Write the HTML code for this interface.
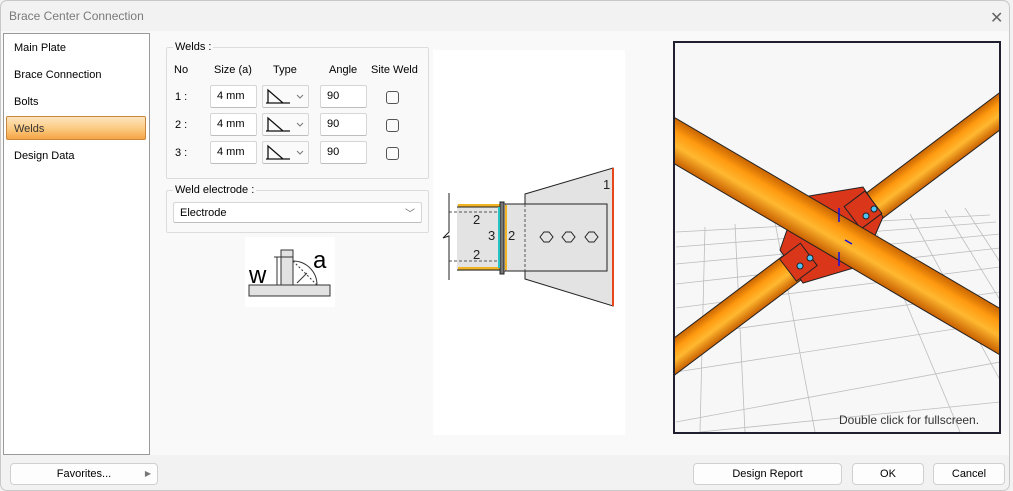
<!DOCTYPE html>
<html><head><meta charset="utf-8"><style>
*{box-sizing:border-box;margin:0;padding:0}
body{width:1013px;height:491px;background:#f2f2f2;font-family:"Liberation Sans",sans-serif;font-size:11px;color:#000;position:relative;overflow:hidden}
.a{position:absolute}
.in{position:absolute;background:#fff;border:1px solid #d6d6d6;border-bottom-color:#bdbdbd;border-radius:2px;padding:4px 0 0 6px;font-size:11px;height:23px}
.cb{position:absolute;width:13px;height:13px;border:1px solid #555;border-radius:3px;background:#fafafa}
.btn{position:absolute;background:#fdfdfd;border:1px solid #d0d0d0;border-radius:4px;text-align:center;line-height:20px;font-size:11px;height:22px}
.grp{position:absolute;border:1px solid #dcdcdc;border-radius:2px}
.lg{position:absolute;background:#f9f9f9;padding:0 2px;top:-7px;left:6px;font-size:11px}
.nav{position:absolute;left:14px;font-size:11px}
</style></head><body>
<div class="a" style="left:0;top:0;width:1010px;height:491px;border:1px solid #c8c8c8;border-radius:7px;background:#f2f2f2"></div>
<div class="a" style="left:9px;top:9px;color:#7a7a7a;font-size:12px">Brace Center Connection</div>
<div class="a" style="left:990px;top:8px;color:#666;font-size:16px">✕</div>
<div class="a" style="left:1px;top:31px;width:1008px;height:424px;background:#f9f9f9"></div>
<!-- left nav -->
<div class="a" style="left:3px;top:33px;width:147px;height:422px;background:#fff;border:1px solid #9a9a9a"></div>
<div class="nav" style="top:42px">Main Plate</div>
<div class="nav" style="top:69px">Brace Connection</div>
<div class="nav" style="top:96px">Bolts</div>
<div class="a" style="left:6px;top:116px;width:140px;height:24px;border:1px solid #c8873a;border-radius:2px;background:linear-gradient(#fde4bf,#fbc97f 55%,#f6a444)"></div>
<div class="nav" style="top:123px;color:#333">Welds</div>
<div class="nav" style="top:150px">Design Data</div>
<!-- welds group -->
<div class="grp" style="left:166px;top:47px;width:263px;height:132px"><span class="lg">Welds :</span></div>
<div class="a" style="left:174px;top:64px">No</div>
<div class="a" style="left:214px;top:64px">Size (a)</div>
<div class="a" style="left:273px;top:64px">Type</div>
<div class="a" style="left:329px;top:64px">Angle</div>
<div class="a" style="left:371px;top:64px">Site Weld</div>
<div id="rows"></div>
<!-- electrode -->
<div class="grp" style="left:166px;top:190px;width:263px;height:43px"><span class="lg">Weld electrode :</span></div>
<div class="in" style="left:173px;top:202px;width:249px;height:21px;padding-top:4px">Electrode<span class="a" style="right:6px;top:2px;color:#666;font-size:10px">﹀</span></div>
<!-- weld sketch -->
<svg class="a" style="left:245px;top:237px" width="90" height="70">
<rect x="0" y="0" width="90" height="70" fill="#fff"/>
<rect x="36" y="13" width="12" height="35" fill="#e2e2e2" stroke="#333"/>
<rect x="4" y="48" width="81" height="11" fill="#e2e2e2" stroke="#333"/>
<path d="M48 24 A24 24 0 0 1 72 48" fill="none" stroke="#333"/>
<path d="M48 24 L72 48" stroke="#333" stroke-dasharray="2,2"/>
<path d="M52 46 L62 36" stroke="#333"/>
<path d="M32 20 V48 M29 20 H48 M29 48 H36" stroke="#333" fill="none"/>
<text x="4" y="46" font-size="24" font-family="Liberation Sans">w</text>
<text x="68" y="31" font-size="24" font-family="Liberation Sans">a</text>
</svg>
<!-- 2D drawing -->
<svg class="a" style="left:433px;top:50px" width="192" height="385">
<rect width="192" height="385" fill="#fff"/>
<g transform="translate(-433,-50)">
<polygon points="525,194 613,168 613,306 525,279" fill="#e3e3e3" stroke="#222"/>
<line x1="613" y1="168" x2="613" y2="306" stroke="#e8461a" stroke-width="2"/>
<rect x="505" y="204" width="102" height="67" fill="#e3e3e3" stroke="#222"/>
<rect x="457" y="204" width="48" height="67" fill="#e3e3e3"/>
<rect x="458" y="204" width="42" height="3" fill="#f0b323"/><rect x="458" y="267" width="42" height="3" fill="#f0b323"/>
<line x1="457" y1="207" x2="500" y2="207" stroke="#222"/><line x1="457" y1="270" x2="500" y2="270" stroke="#222"/>
<line x1="449" y1="212" x2="497" y2="212" stroke="#555" stroke-dasharray="3,2"/>
<line x1="449" y1="261" x2="497" y2="261" stroke="#555" stroke-dasharray="3,2"/>
<line x1="525" y1="204" x2="525" y2="271" stroke="#555" stroke-dasharray="3,2"/>
<path d="M449 193 V232 L443 238 L449 236 V280" fill="none" stroke="#222"/>
<rect x="500" y="202" width="4" height="72" fill="#777" stroke="#222"/>
<line x1="499" y1="207" x2="499" y2="268" stroke="#25c4c4" stroke-width="2"/>
<line x1="506" y1="205" x2="506" y2="270" stroke="#f0b323" stroke-width="2"/>
<g fill="none" stroke="#222"><polygon points="540,237 544,232 549,232 553,237 549,242 544,242"/><polygon points="562,237 566,232 571,232 575,237 571,242 566,242"/><polygon points="585,237 589,232 594,232 598,237 594,242 589,242"/></g>
<g font-size="13" font-family="Liberation Sans" fill="#222"><text x="473" y="224">2</text><text x="488" y="240">3</text><text x="508" y="240">2</text><text x="473" y="259">2</text><text x="603" y="189">1</text></g>
</g></svg>
<!-- 3D view -->
<svg class="a" style="left:673px;top:41px" width="328" height="393">
<rect x="1" y="1" width="326" height="391" fill="#f7f7f7" stroke="#1f1f30" stroke-width="2"/>
<defs>
<linearGradient id="o1" x1="0" y1="0" x2="0" y2="1"><stop offset="0" stop-color="#c86400"/><stop offset=".3" stop-color="#ff9a10"/><stop offset=".6" stop-color="#ffb830"/><stop offset="1" stop-color="#c86000"/></linearGradient>
<clipPath id="cl"><rect x="2" y="2" width="324" height="389"/></clipPath>
</defs>
<g clip-path="url(#cl)">
<g transform="translate(-673,-41)">
<g stroke="#bdbdbd" stroke-width="0.8" fill="none">
<path d="M676 232 L990 215 M676 247 L996 222 M676 264 L1000 234 M676 284 L1000 248 M676 308 L1000 267 M676 337 L1000 292 M676 372 L1000 322 M676 422 L1000 362 M700 432 L1000 402"/>
<path d="M705 227 L700 432 M735 224 L745 432 M775 222 L815 432 M870 217 L960 432 M910 214 L1000 380 M945 210 L1000 300 M965 208 L1000 262"/>
</g>
<g transform="translate(675,356) rotate(-37)"><rect x="-20" y="-15" width="440" height="30" fill="url(#o1)" stroke="#222"/></g>
<polygon points="803,197 863,187 883,217 873,240 857,267 803,283 780,250 787,230" fill="#d9361a" stroke="#222"/>
<g transform="rotate(-37 799 263)"><rect x="786" y="248" width="26" height="28" fill="#d9361a" stroke="#222"/></g>
<g transform="rotate(-37 863 210)"><rect x="850" y="196" width="26" height="28" fill="#d9361a" stroke="#222"/></g>
<circle cx="800" cy="266" r="3" fill="#4fc3f7" stroke="#222"/><circle cx="810" cy="258" r="3" fill="#4fc3f7" stroke="#222"/>
<circle cx="866" cy="216" r="3" fill="#4fc3f7" stroke="#222"/><circle cx="874" cy="209" r="3" fill="#4fc3f7" stroke="#222"/>
<g transform="translate(675,141) rotate(30.4)"><rect x="-20" y="-20" width="420" height="40" fill="url(#o1)" stroke="#222"/></g>
<path d="M839 208 V222 M839 252 V266 M845 240 L852 244" stroke="#1010e0" stroke-width="1.5"/>
</g></g>
<text x="166" y="383" font-size="12" font-family="Liberation Sans" fill="#333">Double click for fullscreen.</text>
</svg>
<!-- footer -->
<div class="btn" style="left:10px;top:463px;width:148px">Favorites...<span class="a" style="right:6px;top:0;color:#777;font-size:8px">▶</span></div>
<div class="btn" style="left:693px;top:463px;width:149px">Design Report</div>
<div class="btn" style="left:852px;top:463px;width:72px">OK</div>
<div class="btn" style="left:933px;top:463px;width:72px">Cancel</div>
<script>
var h='';[85,113,141].forEach(function(y,i){
h+='<div class="a" style="left:175px;top:'+(y+6)+'px">'+(i+1)+' :</div>';
h+='<div class="in" style="left:210px;top:'+y+'px;width:47px">4 mm</div>';
h+='<div class="in" style="left:262px;top:'+y+'px;width:47px;background:#fafafa;padding:0"><svg width="45" height="21"><path d="M3 17 H27 M5 17 V4 L20 17" stroke="#111" fill="none" stroke-width="1.3"/><path d="M34 9 L37 12 L40 9" stroke="#777" fill="none"/></svg></div>';
h+='<div class="in" style="left:320px;top:'+y+'px;width:47px">90</div>';
h+='<div class="cb" style="left:386px;top:'+(y+6)+'px"></div>';});
document.getElementById('rows').innerHTML=h;
</script>
</body></html>
